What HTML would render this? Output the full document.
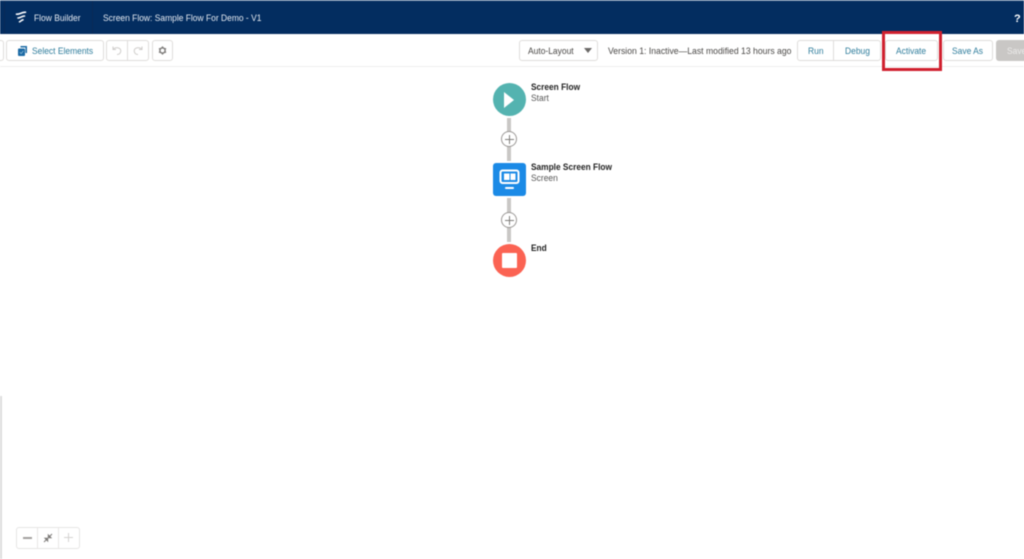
<!DOCTYPE html>
<html lang="en"><head><meta charset="utf-8"><title>Flow Builder</title>
<style>
html,body{margin:0;padding:0;width:1024px;height:559px;overflow:hidden;background:#fff}
body{position:relative;font-family:"Liberation Sans",sans-serif;filter:blur(.4px)}
.a{position:absolute}
.t{position:absolute;white-space:nowrap;font-size:9px;line-height:12px;transform-origin:0 50%;transform:scaleX(.94)}
.n{transform:scaleX(.925)}
.b{position:absolute;box-sizing:border-box;background:#fff;border:1px solid #dfdddb;border-radius:3px}
.l{color:#2f7d9c}
.c{position:absolute;box-sizing:border-box;width:16px;height:16px;border:1px solid #9b9896;border-radius:50%;background:#fff;left:501px}
.c:before{content:"";position:absolute;left:2.5px;top:6.5px;width:9px;height:1px;background:#807e7b}
.c:after{content:"";position:absolute;left:6.5px;top:2.5px;width:1px;height:9px;background:#807e7b}
.v{position:absolute;left:507px;width:4px;background:#c9c7c5}
</style></head><body>
<div class="a" style="left:0;top:0;width:1024px;height:34px;background:#032d60"></div>
<div class="a" style="left:0;top:0;width:1024px;height:1px;background:#6f88a8"></div>
<div class="a" style="left:4px;top:1px;width:1px;height:33px;background:#0a2a55"></div>
<div class="a" style="left:92px;top:1px;width:1px;height:33px;background:#0a2a55"></div>
<svg class="a" style="left:15px;top:11px" width="12" height="13" viewBox="0 0 12 13" fill="none" stroke="#fff" stroke-width="1.6" stroke-linecap="round"><path d="M1.5 3.2C4 3.6 7 1.2 10.5 1.2M3 7C5 7.2 7 5 9.5 5M4.5 10.8C5.5 10.8 6.5 8.8 8 8.8"/></svg>
<div class="t" style="left:34px;top:12px;color:#e6ebf2">Flow Builder</div>
<div class="t" style="left:103px;top:12px;color:#e6ebf2">Screen Flow: Sample Flow For Demo - V1</div>
<div class="t" style="left:1014px;top:13px;color:#fff;font-size:11px;font-weight:bold;transform:none">?</div>

<div class="a" style="left:0;top:66px;width:1024px;height:1px;background:#eeeeee"></div>
<div class="b" style="left:-5px;top:40px;width:9px;height:21px"></div>
<div class="b" style="left:6px;top:40px;width:98px;height:21px"></div>
<svg class="a" style="left:18px;top:46px" width="9" height="10" viewBox="0 0 9 10"><path d="M2.5 0H9V7H7.5V1.5H2.5Z" fill="#1b6aa5"/><rect x="0" y="2.5" width="7" height="7.5" rx="1" fill="#1b6aa5"/><path d="M1.8 6.2L3.2 7.6L5.4 4.8" stroke="#9cc4de" stroke-width=".7" fill="none"/></svg>
<div class="t l" style="left:32px;top:45px">Select Elements</div>
<div class="b" style="left:106px;top:40px;width:43px;height:21px"></div>
<div class="a" style="left:127px;top:41px;width:1px;height:19px;background:#dfdddb"></div>
<svg class="a" style="left:112px;top:45px" width="10" height="11" viewBox="0 0 10 11" fill="none" stroke="#cfcdcb" stroke-width="1"><path d="M1 1.5V4.5H4M1.2 4.3C3 1.8 8.8 2.2 8.8 6C8.8 8.2 7 9.5 5 9.5"/></svg>
<svg class="a" style="left:133px;top:45px" width="10" height="11" viewBox="0 0 10 11" fill="none" stroke="#cfcdcb" stroke-width="1"><path d="M9 1.5V4.5H6M8.8 4.3C7 1.8 1.2 2.2 1.2 6C1.2 8.2 3 9.5 5 9.5"/></svg>
<div class="b" style="left:152px;top:40px;width:21px;height:21px"></div>
<svg class="a" style="left:158px;top:46px" width="9" height="9" viewBox="0 0 11 11"><circle cx="5.5" cy="5.5" r="3.2" fill="none" stroke="#7d7b79" stroke-width="1.8"/><path d="M5.5 .5V2.5M5.5 8.5V10.5M1.2 3L2.9 4M8.1 7L9.8 8M1.2 8L2.9 7M8.1 4L9.8 3" stroke="#7d7b79" stroke-width="1.6"/></svg>

<div class="b" style="left:519px;top:40px;width:79px;height:21px"></div>
<div class="t" style="left:528px;top:45px;color:#4a4846">Auto-Layout</div>
<div class="a" style="left:584px;top:48px;width:0;height:0;border-left:4px solid transparent;border-right:4px solid transparent;border-top:5px solid #6b6967"></div>
<div class="t" style="left:608px;top:45px;color:#4a4846;transform:scaleX(.96)">Version 1: Inactive—Last modified 13 hours ago</div>

<div class="b" style="left:797px;top:40px;width:84px;height:21px"></div>
<div class="a" style="left:833px;top:41px;width:1px;height:19px;background:#dfdddb"></div>
<div class="t l" style="left:808px;top:45px">Run</div>
<div class="t l" style="left:845px;top:45px">Debug</div>
<div class="b" style="left:885px;top:40px;width:53px;height:21px"></div>
<div class="t l" style="left:896px;top:45px">Activate</div>
<div class="b" style="left:943px;top:40px;width:50px;height:21px"></div>
<div class="t l" style="left:952px;top:45px">Save As</div>
<div class="a" style="left:996px;top:40px;width:32px;height:21px;background:#c9c7c5;border-radius:3px"></div>
<div class="t" style="left:1007px;top:45px;color:#ecebea">Save</div>
<div class="a" style="box-sizing:border-box;left:882px;top:31px;width:60px;height:40px;border:3px solid #d0202e"></div>

<div class="v" style="top:118px;height:43px"></div>
<div class="c" style="top:131px"></div>
<div class="a" style="left:493px;top:83px;width:33px;height:33px;border-radius:50%;background:#54b3b0"></div>
<div class="a" style="left:504px;top:92px;width:0;height:0;border-left:10px solid #fff;border-top:8px solid transparent;border-bottom:8px solid transparent"></div>
<div class="t n" style="left:531px;top:81px;color:#222;font-weight:bold">Screen Flow</div>
<div class="t" style="left:531px;top:92px;color:#555">Start</div>

<div class="v" style="top:198px;height:44px"></div>
<div class="c" style="top:212px"></div>
<div class="a" style="left:493px;top:163px;width:33px;height:33px;border-radius:3px;background:#1b8ae6"></div>
<svg class="a" style="left:499px;top:169px" width="21" height="21" viewBox="0 0 21 21"><rect x="1.5" y="1.5" width="18" height="12.5" rx="2" fill="none" stroke="#fff" stroke-width="2"/><rect x="5" y="4.5" width="5.5" height="6.5" fill="#fff"/><rect x="11.5" y="4.5" width="5" height="6.5" fill="#fff"/><rect x="6" y="18" width="9" height="2" rx="1" fill="#fff"/></svg>
<div class="t n" style="left:531px;top:161px;color:#222;font-weight:bold">Sample Screen Flow</div>
<div class="t" style="left:531px;top:172px;color:#555">Screen</div>

<div class="a" style="left:493px;top:244px;width:33px;height:33px;border-radius:50%;background:#fb6353"></div>
<div class="a" style="left:502px;top:253px;width:15px;height:15px;border-radius:1px;background:#fff"></div>
<div class="t n" style="left:531px;top:242px;color:#222;font-weight:bold">End</div>

<div class="a" style="left:0;top:396px;width:2px;height:163px;background:#dcdcdc"></div>
<div class="b" style="left:16px;top:527px;width:64px;height:22px;border-color:#e6e5e4"></div>
<div class="a" style="left:37px;top:528px;width:1px;height:20px;background:#e8e7e6"></div>
<div class="a" style="left:58px;top:528px;width:1px;height:20px;background:#e8e7e6"></div>
<div class="a" style="left:23px;top:537px;width:9px;height:1.5px;background:#a3a19f"></div>
<svg class="a" style="left:43px;top:533px" width="10" height="10" viewBox="0 0 10 10" fill="none" stroke="#7d7b79" stroke-width="1"><path d="M1 9L4 6M9 1L6 4"/><path d="M2 5.3H4.7V8ZM8 4.7H5.3V2Z" fill="#7d7b79"/></svg>
<div class="a" style="left:64px;top:537px;width:9px;height:1px;background:#d5d3d1"></div>
<div class="a" style="left:68px;top:533px;width:1px;height:9px;background:#d5d3d1"></div>
</body></html>
